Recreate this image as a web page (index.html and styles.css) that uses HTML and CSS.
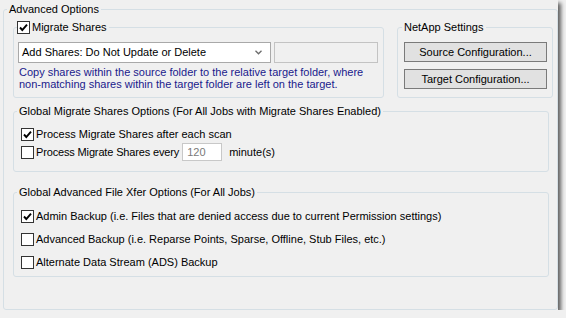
FILE: index.html
```html
<!DOCTYPE html>
<html>
<head>
<meta charset="utf-8">
<link rel="stylesheet" href="styles.css">
</head>
<body>
<div class="window">
  <fieldset class="group outer">
    <legend class="title">Advanced Options</legend>
    <div class="outer-body">
      <div class="top-row">
        <fieldset class="group migrate">
          <legend class="title cb-title">
            <svg class="cb" width="13" height="13" viewBox="0 0 13 13"><rect x="0.5" y="0.5" width="12" height="12" fill="#fff" stroke="#333"/><polyline points="3,6.5 5.3,9 10,3.6" fill="none" stroke="#000" stroke-width="1.9"/></svg>
            <span>Migrate Shares</span>
          </legend>
          <div class="select-row">
            <div class="select">
              <span>Add Shares: Do Not Update or Delete</span>
              <svg class="chev" width="7" height="5" viewBox="0 0 7 5"><polyline points="0.5,0.8 3.5,3.8 6.5,0.8" fill="none" stroke="#6b6b6b" stroke-width="1.3"/></svg>
            </div>
            <div class="textbox"></div>
          </div>
          <p class="note">Copy shares within the source folder to the relative target folder, where<br>non-matching shares within the target folder are left on the target.</p>
        </fieldset>
        <fieldset class="group netapp">
          <legend class="title">NetApp Settings</legend>
          <div class="btns">
            <button class="btn">Source Configuration...</button>
            <button class="btn">Target Configuration...</button>
          </div>
        </fieldset>
      </div>

      <fieldset class="group gmigrate">
        <legend class="title">Global Migrate Shares Options (For All Jobs with Migrate Shares Enabled)</legend>
        <div class="rows rows-migrate">
          <div class="row">
            <svg class="cb" width="13" height="13" viewBox="0 0 13 13"><rect x="0.5" y="0.5" width="12" height="12" fill="#fff" stroke="#333"/><polyline points="3,6.5 5.3,9 10,3.6" fill="none" stroke="#000" stroke-width="1.9"/></svg>
            <span>Process Migrate Shares after each scan</span>
          </div>
          <div class="row row-input">
            <svg class="cb" width="13" height="13" viewBox="0 0 13 13"><rect x="0.5" y="0.5" width="12" height="12" fill="#fff" stroke="#333"/></svg>
            <span class="tight">Process Migrate Shares every</span>
            <div class="num">120</div>
            <span class="unit">minute(s)</span>
          </div>
        </div>
      </fieldset>

      <fieldset class="group xfer">
        <legend class="title">Global Advanced File Xfer Options (For All Jobs)</legend>
        <div class="rows rows-xfer">
          <div class="row">
            <svg class="cb" width="13" height="13" viewBox="0 0 13 13"><rect x="0.5" y="0.5" width="12" height="12" fill="#fff" stroke="#333"/><polyline points="3,6.5 5.3,9 10,3.6" fill="none" stroke="#000" stroke-width="1.9"/></svg>
            <span>Admin Backup (i.e. Files that are denied access due to current Permission settings)</span>
          </div>
          <div class="row">
            <svg class="cb" width="13" height="13" viewBox="0 0 13 13"><rect x="0.5" y="0.5" width="12" height="12" fill="#fff" stroke="#333"/></svg>
            <span>Advanced Backup (i.e. Reparse Points, Sparse, Offline, Stub Files, etc.)</span>
          </div>
          <div class="row">
            <svg class="cb" width="13" height="13" viewBox="0 0 13 13"><rect x="0.5" y="0.5" width="12" height="12" fill="#fff" stroke="#333"/></svg>
            <span>Alternate Data Stream (ADS) Backup</span>
          </div>
        </div>
      </fieldset>
    </div>
  </fieldset>
</div>
</body>
</html>
```

FILE: styles.css
```css
* { box-sizing: border-box; }
html, body { margin: 0; padding: 0; }
body {
  background: #f0f0f0;
  font-family: "Liberation Sans", Arial, sans-serif;
  font-size: 11px;
  line-height: 13px;
  color: #000;
}
.window {
  width: 558px;
  height: 310px;
  background: #f0f0f0;
  box-shadow: 3px 3px 4px rgba(0, 0, 0, 0.6);
  padding-top: 3px;
  padding-left: 3px;
}
.group {
  margin: 0;
  padding: 0;
  min-width: 0;
  border: 1px solid #d5dfe5;
  border-radius: 3px;
}
.title {
  padding: 0 2px;
  line-height: 13px;
  height: 13px;
}
.outer {
  width: 555px;
  height: 307px;
}
.outer > .title { margin-left: 3px; }
.outer-body {
  display: flex;
  flex-direction: column;
  padding: 5px 0 0 9px;
}
.top-row {
  display: flex;
  gap: 13px;
}
.migrate {
  width: 371px;
  height: 77px;
}
.cb-title {
  margin-left: 3px;
  padding: 0 2px 0 0;
  display: flex;
  align-items: center;
  gap: 2px;
}
.cb { flex: none; display: block; }
.select-row {
  display: flex;
  gap: 3px;
  padding: 8px 0 0 4px;
}
.select {
  width: 253px;
  height: 21px;
  background: #fff;
  border: 1px solid #a9a9a9;
  display: flex;
  align-items: center;
  justify-content: space-between;
  padding: 0 8px 0 3px;
}
.textbox {
  width: 104px;
  height: 21px;
  background: #f0f0f0;
  border: 1px solid #c3c3c3;
}
.note {
  margin: 3px 0 0 5px;
  line-height: 12px;
  color: #1a1a8c;
}
.netapp {
  width: 156px;
  height: 77px;
}
.netapp > .title { margin-left: 4px; }
.btns {
  display: flex;
  flex-direction: column;
  gap: 7px;
  padding: 8px 0 0 6px;
}
.btn {
  width: 143px;
  height: 20px;
  margin: 0;
  padding: 0;
  font: inherit;
  color: #000;
  background: #e1e1e1;
  border: 1px solid #7a7a7a;
  border-radius: 0;
}
.gmigrate {
  margin-top: 7px;
  width: 536px;
  height: 67px;
}
.gmigrate > .title, .xfer > .title { margin-left: 3px; }
.rows {
  display: flex;
  flex-direction: column;
  padding-left: 7px;
}
.row {
  display: flex;
  align-items: center;
  gap: 2px;
  height: 16px;
}
.rows-migrate { padding-top: 8px; gap: 1px; }
.row-input { height: 18px; }
.tight { letter-spacing: -0.15px; }
.num {
  width: 40px;
  height: 18px;
  margin-left: 1px;
  background: #fff;
  border: 1px solid #c8c8c8;
  color: #7a7a7a;
  padding: 2px 0 0 4px;
}
.unit { margin-left: 5px; }
.xfer {
  margin-top: 14px;
  width: 536px;
  height: 91px;
}
.rows-xfer { padding-top: 9px; gap: 7px; }
```
